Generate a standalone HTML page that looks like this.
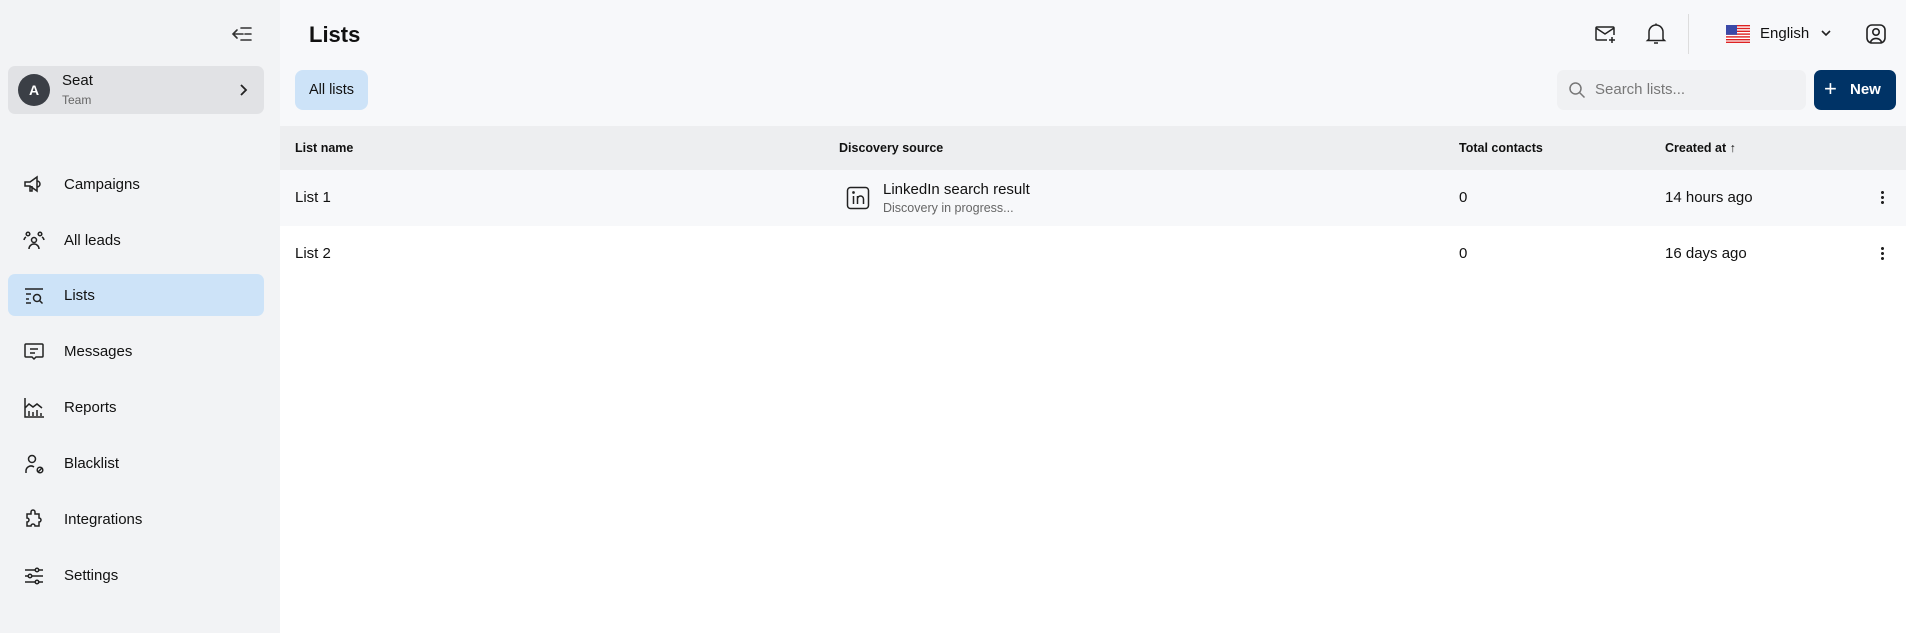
<!DOCTYPE html>
<html><head><meta charset="utf-8"><style>
*{box-sizing:border-box;margin:0;padding:0}
body{width:1906px;height:633px;overflow:hidden;font-family:"Liberation Sans",sans-serif;color:#111;background:#fff;position:relative}
.abs{position:absolute}
.side{left:0;top:0;width:280px;height:633px;background:#f2f3f5}
.main{left:280px;top:0;width:1626px;height:126px;background:#f7f8fa}
.nav{position:absolute;left:8px;width:256px;height:42px;display:flex;align-items:center;font-size:15px;border-radius:7px}
.nav svg{position:absolute;left:14px;top:10px}
.nav span{position:absolute;left:56px}
.th{position:absolute;top:141px;font-size:12.5px;font-weight:bold}
.td{position:absolute;font-size:15px}
</style></head><body>
<div class="abs side"></div>
<div class="abs main"></div>
<!-- collapse -->
<svg class="abs" style="left:231px;top:24px" width="22" height="20" viewBox="0 0 22 20" fill="none" stroke="#333" stroke-width="1.6" stroke-linecap="round"><path d="M2 10h10M6 6l-4 4 4 4M10 4h10M14 10h6M10 16h10"/></svg>
<div class="abs" style="left:8px;top:66px;width:256px;height:48px;background:#e1e2e5;border-radius:7px"></div>
<div class="abs" style="left:18px;top:74px;width:32px;height:32px;border-radius:50%;background:#3b3f46;color:#fff;font-size:14px;font-weight:bold;text-align:center;line-height:32px">A</div>
<div class="abs" style="left:62px;top:72px;font-size:15px">Seat</div>
<div class="abs" style="left:62px;top:93px;font-size:12px;color:#666">Team</div>
<svg class="abs" style="left:238px;top:83px" width="10" height="14" viewBox="0 0 10 14" fill="none" stroke="#222" stroke-width="1.8"><path d="M3 2l5 5-5 5"/></svg>

<div class="nav" style="top:163px"><svg width="24" height="24" viewBox="0 0 24 24" fill="none" stroke="#222" stroke-width="1.5"><path d="M3 9h5l7-5v14l-7-5H3zM8 13v5h2v-5M15 8a3 3 0 0 1 0 6"/></svg><span>Campaigns</span></div>
<div class="nav" style="top:219px"><svg width="24" height="24" viewBox="0 0 24 24" fill="none" stroke="#222" stroke-width="1.5"><circle cx="12" cy="11" r="2.5"/><circle cx="6" cy="5" r="1.8"/><circle cx="18" cy="5" r="1.8"/><path d="M7 20a5 5 0 0 1 10 0M2 11a4 4 0 0 1 2-3M22 11a4 4 0 0 0-2-3"/></svg><span>All leads</span></div>
<div class="nav" style="top:274px;background:#cde3f8"><svg width="24" height="24" viewBox="0 0 24 24" fill="none" stroke="#222" stroke-width="1.5"><path d="M3 5h18M4 10h5M4 15h3M4 19h5"/><circle cx="15" cy="14" r="3.5"/><path d="M17.5 16.5l3 3"/></svg><span>Lists</span></div>
<div class="nav" style="top:330px"><svg width="24" height="24" viewBox="0 0 24 24" fill="none" stroke="#222" stroke-width="1.5"><path d="M4 4h16a1 1 0 0 1 1 1v11a1 1 0 0 1-1 1h-6l-2 2-2-2H4a1 1 0 0 1-1-1V5a1 1 0 0 1 1-1zM8 9h8M8 13h5"/></svg><span>Messages</span></div>
<div class="nav" style="top:386px"><svg width="24" height="24" viewBox="0 0 24 24" fill="none" stroke="#222" stroke-width="1.5"><path d="M3 2v19h19M3 12l4-4 4 3 4-3 5 4M7 20v-5M11 20v-4M15 20v-6M19 20v-3"/></svg><span>Reports</span></div>
<div class="nav" style="top:442px"><svg width="24" height="24" viewBox="0 0 24 24" fill="none" stroke="#222" stroke-width="1.5"><circle cx="10" cy="7" r="3.5"/><path d="M4 21v-2a5 5 0 0 1 8-4"/><circle cx="18" cy="18" r="2.8"/><path d="M16 20l4-4"/></svg><span>Blacklist</span></div>
<div class="nav" style="top:498px"><svg width="24" height="24" viewBox="0 0 24 24" fill="none" stroke="#222" stroke-width="1.5"><path d="M9 4a2 2 0 0 1 4 0v2h4v4a2 2 0 0 1 0 4v4h-4a2 2 0 0 0-4 0H5v-4a2 2 0 0 0 0-4V6h4z"/></svg><span>Integrations</span></div>
<div class="nav" style="top:554px"><svg width="24" height="24" viewBox="0 0 24 24" fill="none" stroke="#222" stroke-width="1.5"><path d="M3 6h18M3 12h18M3 18h18"/><circle cx="15" cy="6" r="1.8" fill="#f2f3f5"/><circle cx="8" cy="12" r="1.8" fill="#f2f3f5"/><circle cx="15" cy="18" r="1.8" fill="#f2f3f5"/></svg><span>Settings</span></div>

<div class="abs" style="left:309px;top:22px;font-size:22px;font-weight:bold">Lists</div>
<div class="abs" style="left:295px;top:70px;width:73px;height:40px;background:#cde3f8;border-radius:8px;font-size:14.5px;text-align:center;line-height:40px">All lists</div>

<!-- top right -->
<svg class="abs" style="left:1593px;top:22px" width="24" height="24" viewBox="0 0 24 24" fill="none" stroke="#222" stroke-width="1.5"><path d="M14 18H4a1 1 0 0 1-1-1V6a1 1 0 0 1 1-1h16a1 1 0 0 1 1 1v7M3 6l9 6 9-6M19 15v6M16 18h6"/></svg>
<svg class="abs" style="left:1645px;top:22px" width="22" height="24" viewBox="0 0 22 24" fill="none" stroke="#222" stroke-width="1.5"><path d="M4 17V10a7 7 0 0 1 14 0v7l1.5 1.5h-17zM9 21h4M11 3V1.5"/></svg>
<div class="abs" style="left:1688px;top:14px;width:1px;height:40px;background:#ddd"></div>
<svg class="abs" style="left:1726px;top:25px" width="24" height="18" viewBox="0 0 24 18"><rect width="24" height="18" fill="#fff"/><g fill="#d22"><rect y="0" width="24" height="1.4"/><rect y="2.8" width="24" height="1.4"/><rect y="5.6" width="24" height="1.4"/><rect y="8.4" width="24" height="1.4"/><rect y="11.2" width="24" height="1.4"/><rect y="14" width="24" height="1.4"/><rect y="16.6" width="24" height="1.4"/></g><rect width="11" height="9.8" fill="#3b4aa8"/></svg>
<div class="abs" style="left:1760px;top:25px;font-size:15px">English</div>
<svg class="abs" style="left:1820px;top:28px" width="12" height="10" viewBox="0 0 12 10" fill="none" stroke="#222" stroke-width="1.6"><path d="M2 3l4 4 4-4"/></svg>
<svg class="abs" style="left:1864px;top:22px" width="24" height="24" viewBox="0 0 24 24" fill="none" stroke="#222" stroke-width="1.6"><rect x="3" y="3" width="18" height="18" rx="5"/><circle cx="12" cy="10" r="3.2"/><path d="M6.5 20a6 6 0 0 1 11 0"/></svg>

<div class="abs" style="left:1557px;top:70px;width:249px;height:40px;background:#f0f1f3;border-radius:7px"></div>
<svg class="abs" style="left:1568px;top:81px" width="18" height="18" viewBox="0 0 18 18" fill="none" stroke="#777" stroke-width="1.5"><circle cx="7.5" cy="7.5" r="5.5"/><path d="M11.5 11.5l5 5"/></svg>
<div class="abs" style="left:1595px;top:81px;font-size:15px;color:#777">Search lists...</div>
<div class="abs" style="left:1814px;top:70px;width:82px;height:40px;background:#003366;border-radius:7px;color:#fff;font-size:15px;font-weight:bold;line-height:40px"><span style="position:absolute;left:10px;top:-1px;font-weight:normal;font-size:22px">+</span><span style="position:absolute;left:36px">New</span></div>

<!-- table -->
<div class="abs" style="left:280px;top:126px;width:1626px;height:44px;background:#edeef0"></div>
<div class="abs" style="left:280px;top:170px;width:1626px;height:56px;background:#f7f8fa"></div>
<div class="th" style="left:295px">List name</div>
<div class="th" style="left:839px">Discovery source</div>
<div class="th" style="left:1459px">Total contacts</div>
<div class="th" style="left:1665px">Created at &#8593;</div>

<div class="td" style="left:295px;top:189px">List 1</div>
<svg class="abs" style="left:846px;top:186px" width="24" height="24" viewBox="0 0 24 24" fill="none" stroke="#222" stroke-width="1.5"><rect x="1.5" y="1.5" width="21" height="21" rx="3"/><path d="M7.5 10v8M11.5 18v-8M11.5 13a3 3 0 0 1 6 0v5"/><circle cx="7.5" cy="6.5" r=".6" fill="#222"/></svg>
<div class="td" style="left:883px;top:181px">LinkedIn search result</div>
<div class="abs" style="left:883px;top:201px;font-size:12.5px;color:#666">Discovery in progress...</div>
<div class="td" style="left:1459px;top:189px">0</div>
<div class="td" style="left:1665px;top:189px">14 hours ago</div>
<div class="abs" style="left:1881px;top:190px;width:3px;height:15px;background:radial-gradient(circle,#222 1.4px,transparent 1.6px) 0 0/3px 5px"></div>

<div class="td" style="left:295px;top:245px">List 2</div>
<div class="td" style="left:1459px;top:245px">0</div>
<div class="td" style="left:1665px;top:245px">16 days ago</div>
<div class="abs" style="left:1881px;top:246px;width:3px;height:15px;background:radial-gradient(circle,#222 1.4px,transparent 1.6px) 0 0/3px 5px"></div>
</body></html>
